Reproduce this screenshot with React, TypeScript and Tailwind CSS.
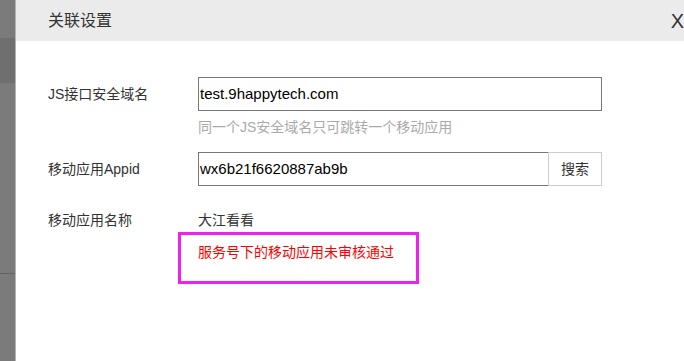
export default function App() {
  const font = { fontFamily: '"Liberation Sans", "Noto Sans CJK SC", sans-serif' };

  return (
    <div className="flex h-[361px] w-[684px] overflow-hidden bg-white" style={font}>
      {/* backdrop strip left */}
      <div className="flex w-[15px] shrink-0 flex-col">
        <div className="h-[38px] bg-[#7b7b7b]" />
        <div className="h-[45px] bg-[#6f6f6f]" />
        <div className="h-[190px] bg-[#7b7b7b]" />
        <div className="h-px bg-[#646464]" />
        <div className="flex-1 bg-[#7b7b7b]" />
      </div>

      {/* modal */}
      <div className="flex min-w-0 flex-1 flex-col border-l border-[#b4b4b4]">
        <div className="flex h-[41px] shrink-0 items-center justify-between bg-[#ebebeb] pl-[32px]">
          <span className="text-[16px] leading-none text-[#333]">关联设置</span>
          <span className="mr-0 text-[20px] font-light leading-none text-[#333]">X</span>
        </div>

        <div className="flex flex-col pl-[32px] pt-[36px] text-[14px] text-[#333]">
          {/* domain */}
          <div className="flex items-center">
            <div className="w-[150px] shrink-0 leading-5">JS接口安全域名</div>
            <div className="flex h-[34px] w-[404px] items-center border border-[#777] pl-[1px] text-[15px] text-black">
              test.9happytech.com
            </div>
          </div>
          <div className="mt-[6px] pl-[150px] leading-5 text-[#aaa]">同一个JS安全域名只可跳转一个移动应用</div>

          {/* appid */}
          <div className="mt-[15px] flex items-center">
            <div className="w-[150px] shrink-0 leading-5">移动应用Appid</div>
            <div className="flex h-[34px] w-[350px] items-center border border-r-0 border-[#777] pl-[1px] text-[15px] text-black">
              wx6b21f6620887ab9b
            </div>
            <div className="flex h-[34px] w-[54px] items-center justify-center border border-[#ccc] text-[#333]">
              搜索
            </div>
          </div>

          {/* app name */}
          <div className="mt-[24px] flex items-center">
            <div className="w-[150px] shrink-0 leading-5">移动应用名称</div>
            <div className="leading-5">大江看看</div>
          </div>

          <div className="ml-[130px] mt-[2px] h-[52px] w-[241px] border-[3px] border-[#f020f0] pl-[17px] pt-[7px]">
            <div className="leading-5 text-[#ff0000]">服务号下的移动应用未审核通过</div>
          </div>
        </div>
      </div>
    </div>
  );
}
